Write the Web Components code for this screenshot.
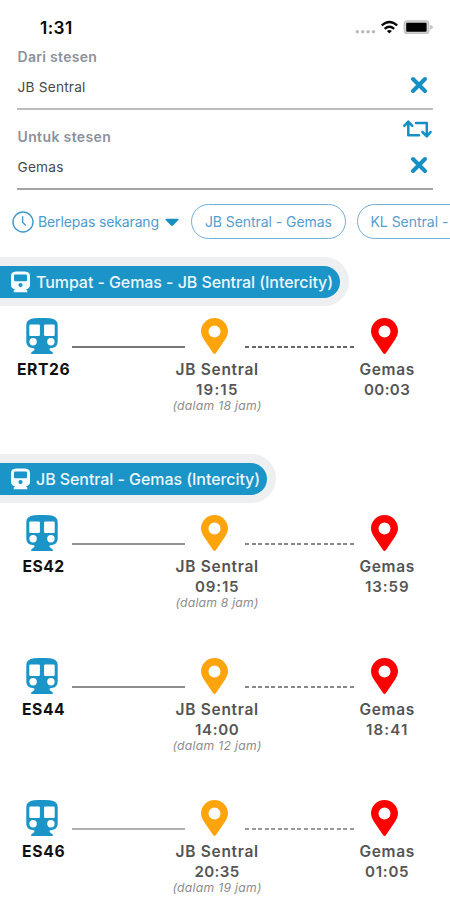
<!DOCTYPE html>
<html lang="ms"><head><meta charset="utf-8"><title>Jadual tren</title>
<style>
html,body{margin:0;background:#fff;width:450px;height:900px;overflow:hidden}
body{font-family:Inter,"Liberation Sans",sans-serif}
</style></head><body>
<timetable-app></timetable-app>
<script>
const make=(name,html,setup)=>customElements.define(name,class extends HTMLElement{
  connectedCallback(){
    if(this.shadowRoot)return;
    const t=document.createElement('template');
    t.innerHTML=typeof html==='function'?html(this):html;
    this.attachShadow({mode:'open'}).append(t.content.cloneNode(true));
    if(setup)setup(this);
  }
});

/* Text line tracked to a given advance width. */
make('fit-text',el=>`<style>:host{display:block;white-space:nowrap;width:${el.getAttribute('w')}px}span{display:inline-block}</style><span>${el.textContent}</span>`,el=>{
  const s=el.shadowRoot.querySelector('span');
  const n=s.textContent.length,w=+el.getAttribute('w');
  s.style.letterSpacing=((w-s.getBoundingClientRect().width)/(n-0.5))+'px';
});

make('status-bar',`<style>
:host{display:flex;height:48px;padding:0 17px 0 40px;box-sizing:border-box;justify-content:space-between;align-items:flex-start}
fit-text{font-size:17.3px;font-weight:600;line-height:20px;margin-top:18px;color:#080808}
svg{display:block;margin-top:18px}
</style><fit-text w="32.5">1:31</fit-text>
<svg width="78" height="18" viewBox="355 18 78 18"><g fill="#b8b8b8"><circle cx="357.3" cy="31.8" r="1.7"/><circle cx="362.7" cy="31.8" r="1.7"/><circle cx="368.1" cy="31.8" r="1.7"/><circle cx="373.5" cy="31.8" r="1.7"/></g>
<g fill="none" stroke="#080808" stroke-width="2.3"><path d="M381.7 25.5Q389.4 18.4 397.2 25.5"/><path d="M384.6 28.8Q389.4 24.7 394.2 28.8"/></g><path d="M386.9 31Q389.4 29 391.9 31L389.4 33.5Z" fill="#080808"/>
<rect x="404.2" y="20.8" width="24.6" height="12.6" rx="3" fill="#d4d4d4" stroke="#c2c2c2" stroke-width="1.3"/><rect x="406.2" y="22.8" width="20.4" height="9" rx="1" fill="#000"/><path d="M430 24.7Q433 25.5 433 27.2T430 29.7Z" fill="#c8c8c8"/></svg>`);

make('station-field',`<style>
:host{display:block;margin:0 17px;padding-bottom:11.5px;border-bottom:2px solid var(--rule,#bdbdbd);box-sizing:border-box}
.l{padding-left:.5px;font-size:14px;font-weight:600;color:#8b9299;line-height:18px}
.r{display:flex;justify-content:space-between;align-items:flex-start;height:18px;margin-top:12px}
.v{padding-left:.5px;font-size:13.7px;color:#484848;line-height:18px}
svg{display:block;margin:-2px 5px 0 0}
</style><div class="l"><slot name="label"></slot></div><div class="r"><div class="v"><slot></slot></div>
<svg width="18" height="18" viewBox="0 0 18 18"><path d="M3 3L15 15M15 3L3 15" stroke="#168fc2" stroke-width="4" stroke-linecap="round"/></svg></div>`);

make('swap-button',`<style>:host{position:absolute;left:402px;top:119px}svg{display:block}</style>
<svg width="31" height="20" viewBox="402 119 31 20" fill="none" stroke="#168fc2" stroke-width="2.5" stroke-linecap="round" stroke-linejoin="round"><path d="M408.3 122.3V135.2H419M404.3 125.8L408.3 121.6L412.3 125.8M416 123H426.8V135.7M422.4 132L426.8 136.4L430.6 132"/></svg>`);

make('route-chip',`<style>:host{display:flex;box-sizing:border-box;flex:none;height:34.5px;align-items:center;padding:0 13px;border:1.4px solid #72afd8;border-radius:18px;font-size:14px;line-height:18px;color:#559ecf}</style><slot></slot>`);

make('filter-bar',`<style>
:host{display:flex;height:35px;margin-top:14px;padding-left:12px;align-items:center;overflow:hidden;color:#4b9ccf;font-size:14px;line-height:18px}
svg{display:block;flex:none}.c{margin-right:4px}.a{margin:2px 12px 0 6px}route-chip+route-chip{margin-left:11.5px}
</style><svg class="c" width="22" height="22" viewBox="0 0 22 22" fill="none" stroke="#4298c9" stroke-width="1.4"><circle cx="11" cy="11" r="10"/><path d="M10.6 5.3V11.3L13.8 14.6"/></svg>
<fit-text w="121">Berlepas sekarang</fit-text><svg class="a" width="14" height="9" viewBox="0 0 14 9"><path d="M1 .8H13Q14 .9 13.4 2L8 7.6Q7 8.4 6 7.6L.6 2Q0 .9 1 .8Z" fill="#168fc2"/></svg>
<route-chip><fit-text w="127">JB Sentral - Gemas</fit-text></route-chip><route-chip style="padding:0 60px 0 12px"><fit-text w="78">KL Sentral -</fit-text></route-chip>`);

make('line-banner',`<style>
:host{display:flex;width:max-content;box-sizing:border-box;padding:8.5px 8.5px 8.5px 0;background:#eeeff0;border-radius:0 25px 25px 0}
.b{display:flex;height:32px;align-items:center;padding:0 7px 0 11px;border-radius:0 16px 16px 0;background:#1b94c7;font-size:16px;line-height:20px;font-weight:500;color:#ecf7fc}
svg{display:block;margin-right:6px}
</style><div class="b"><svg width="19" height="22" viewBox="0 0 19 22"><path fill="#f6fbfe" fill-rule="evenodd" d="M5 .5H14Q19 .8 19 4.8V14Q19 17.4 15 18.3L16.3 19.4V21.3H2.7V19.4L4 18.3Q0 17.4 0 14V4.8Q0 .8 5 .5ZM4.2 3.6Q3 3.6 3 4.8V9Q3 10.2 4.2 10.2H14.8Q16 10.2 16 9V4.8Q16 3.6 14.8 3.6ZM9.5 12A2.1 2.1 0 1 0 9.5 16.2A2.1 2.1 0 1 0 9.5 12Z"/></svg><slot></slot></div>`);

make('map-pin',`<style>:host{display:block;flex:none}svg{display:block}</style><svg width="27" height="36" viewBox="0 0 27 36"><path fill="currentColor" fill-rule="evenodd" d="M13.5 0C6 0 0 6 0 13.3C0 16.6 1.4 19.3 3 21.8L12.2 35.2Q13.5 36.8 14.8 35.2L24 21.8C25.6 19.3 27 16.6 27 13.3C27 6 21 0 13.5 0ZM13.5 7.4A6 6 0 1 1 13.5 19.4A6 6 0 1 1 13.5 7.4Z"/></svg>`);

make('train-journey',el=>{const a=k=>el.getAttribute(k);return `<style>
:host{display:block;height:100px}
.t{display:flex;height:36px;padding-left:25.5px;align-items:flex-start}
.t svg{display:block;flex:none}
.s{width:113px;height:2px;margin:28px 16px 0 14.5px;background:var(--track,#8e8e8e)}
.d{width:109px;height:2px;margin:28px 17px 0 17px;background:repeating-linear-gradient(90deg,var(--dash,#777) 0 4px,transparent 4px 6.56px)}
.l{display:grid;grid-template-columns:87px 260px 80px;justify-items:center;align-items:start;padding-top:6px;font-weight:600;font-size:15.5px;line-height:20px;color:#545454}
.l fit-text{margin:0 auto}
.n{color:#111;font-size:15.7px;font-weight:700}
.h{font-size:15.1px;line-height:19px;color:#565656}
.l .e{margin-top:-1px;font-size:12.2px;font-style:italic;font-weight:400;line-height:15px;color:#8d8d8d}
</style><div class="t"><svg width="32" height="36" viewBox="0 0 32 36"><path fill="#1b94c7" fill-rule="evenodd" d="M8 .3Q16-.4 24 .3Q31.7 1.2 31.7 7V24Q31.5 29.6 25.5 29.9L23.6 30.4V32L26.8 34.5V36H5.2V34.5L8.4 32V30.4L6.5 29.9Q.5 29.6.3 24V7Q.3 1.2 8 .3ZM4.4 6.4Q3.3 6.4 3.3 7.5V16.9Q3.3 18 4.4 18H12.8Q13.9 18 13.9 16.9V7.5Q13.9 6.4 12.8 6.4ZM19.2 6.4Q18.1 6.4 18.1 7.5V16.9Q18.1 18 19.2 18H27.6Q28.7 18 28.7 16.9V7.5Q28.7 6.4 27.6 6.4ZM7.1 20.1A3.7 3.7 0 1 0 7.1 27.5A3.7 3.7 0 1 0 7.1 20.1ZM24.9 20.1A3.7 3.7 0 1 0 24.9 27.5A3.7 3.7 0 1 0 24.9 20.1Z"/></svg><div class="s"></div><map-pin style="color:#ffa40b"></map-pin><div class="d"></div><map-pin style="color:#f00"></map-pin></div>
<div class="l"><fit-text class="n" w="${a('nw')}">${a('train')}</fit-text>
<div><fit-text w="83">JB Sentral</fit-text><fit-text class="h" w="${a('dw')||42}">${a('dep')}</fit-text><fit-text class="e" w="${a('ew')||89}">(dalam ${a('wait')} jam)</fit-text></div>
<div><fit-text w="55">Gemas</fit-text><fit-text class="h" w="${a('aw')||44}">${a('arr')}</fit-text></div></div>`});

make('timetable-app',`<style>
:host{display:flex;flex-direction:column;width:450px;height:900px;position:relative;overflow:hidden;background:#fff}
station-field{flex:none}.two{margin-top:18px;padding-bottom:12.5px;--rule:#a2a4a8}
.b1{margin-top:18px}.g1{margin-top:11.5px;--track:#777;--dash:#666}
.b2{margin-top:36.5px}.g2{margin-top:11.5px;--track:#939393;--dash:#888}
.g3{margin-top:43px;--track:#8e8e8e;--dash:#888}.g4{margin-top:42px;--track:#b0b0b0;--dash:#999}
filter-bar,line-banner,train-journey,status-bar{flex:none}
</style><status-bar></status-bar>
<station-field><fit-text slot="label" w="79.5">Dari stesen</fit-text><fit-text w="68">JB Sentral</fit-text></station-field>
<station-field class="two"><fit-text slot="label" w="93.5">Untuk stesen</fit-text><fit-text w="46">Gemas</fit-text></station-field>
<swap-button></swap-button>
<filter-bar></filter-bar>
<line-banner class="b1"><fit-text w="297">Tumpat - Gemas - JB Sentral (Intercity)</fit-text></line-banner>
<train-journey class="g1" train="ERT26" nw="53" dep="19:15" wait="18" arr="00:03" aw="46"></train-journey>
<line-banner class="b2"><fit-text w="224">JB Sentral - Gemas (Intercity)</fit-text></line-banner>
<train-journey class="g2" train="ES42" nw="42" dep="09:15" dw="44" wait="8" ew="83" arr="13:59"></train-journey>
<train-journey class="g3" train="ES44" nw="43" dep="14:00" dw="44" wait="12" arr="18:41" aw="42"></train-journey>
<train-journey class="g4" train="ES46" nw="43" dep="20:35" dw="45" wait="19" arr="01:05"></train-journey>`);
</script></body></html>
